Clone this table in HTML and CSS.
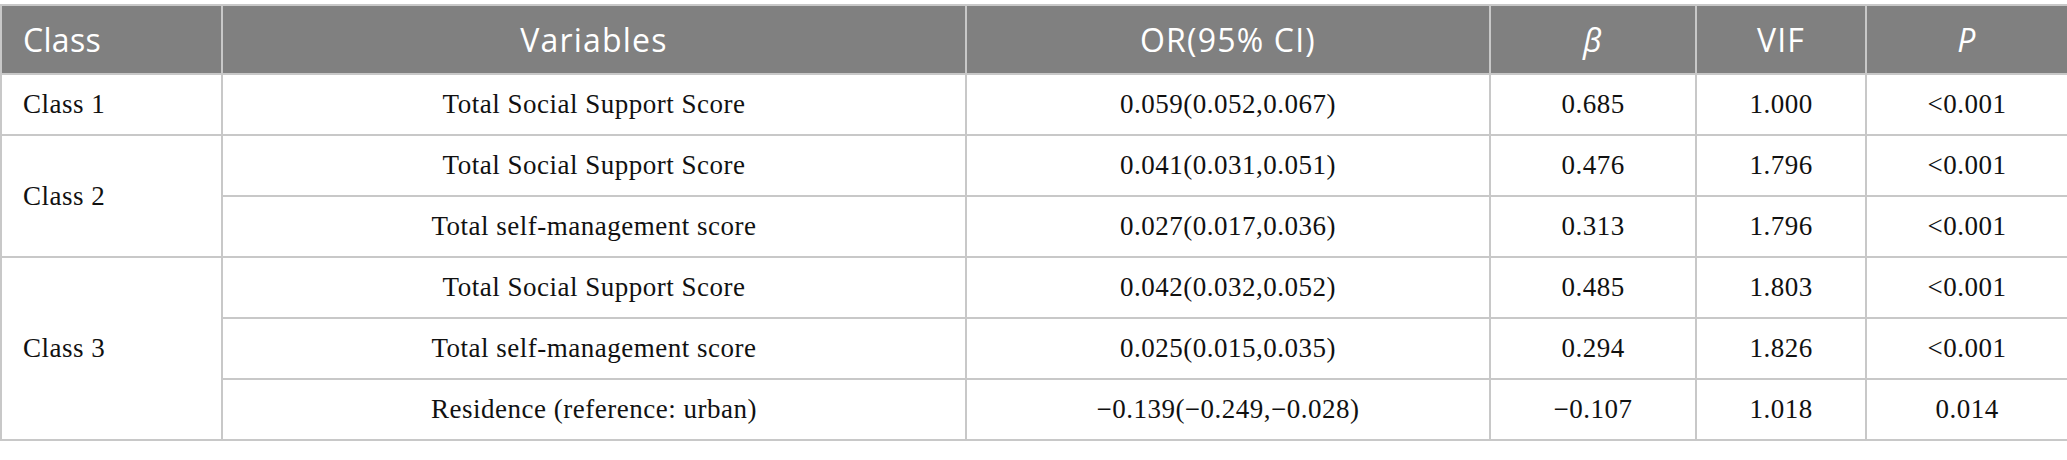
FILE: index.html
```html
<!DOCTYPE html>
<html lang="en">
<head>
<meta charset="utf-8">
<title>Table</title>
<link rel="stylesheet" href="styles.css">
</head>
<body>
<div class="wrap">
<table class="data">
<colgroup>
<col class="w-class"><col class="w-var"><col class="w-or"><col class="w-beta"><col class="w-vif"><col class="w-p">
</colgroup>
<thead>
<tr>
<th class="left">Class</th>
<th>Variables</th>
<th>OR(95% CI)</th>
<th><i>β</i></th>
<th>VIF</th>
<th><i>P</i></th>
</tr>
</thead>
<tbody>
<tr>
<td class="left">Class 1</td>
<td>Total Social Support Score</td>
<td>0.059(0.052,0.067)</td>
<td>0.685</td>
<td>1.000</td>
<td>&lt;0.001</td>
</tr>
<tr>
<td class="left" rowspan="2">Class 2</td>
<td>Total Social Support Score</td>
<td>0.041(0.031,0.051)</td>
<td>0.476</td>
<td>1.796</td>
<td>&lt;0.001</td>
</tr>
<tr>
<td>Total self-management score</td>
<td>0.027(0.017,0.036)</td>
<td>0.313</td>
<td>1.796</td>
<td>&lt;0.001</td>
</tr>
<tr>
<td class="left" rowspan="3">Class 3</td>
<td>Total Social Support Score</td>
<td>0.042(0.032,0.052)</td>
<td>0.485</td>
<td>1.803</td>
<td>&lt;0.001</td>
</tr>
<tr>
<td>Total self-management score</td>
<td>0.025(0.015,0.035)</td>
<td>0.294</td>
<td>1.826</td>
<td>&lt;0.001</td>
</tr>
<tr>
<td>Residence (reference: urban)</td>
<td>&minus;0.139(&minus;0.249,&minus;0.028)</td>
<td>&minus;0.107</td>
<td>1.018</td>
<td>0.014</td>
</tr>
</tbody>
</table>
</div>
</body>
</html>
```
FILE: styles.css
```css
html, body {
  margin: 0;
  padding: 0;
  background: #ffffff;
}
.wrap {
  padding-top: 4px;
}
.data {
  width: 2067px;
  border-collapse: collapse;
  table-layout: fixed;
}
.w-class { width: 221px; }
.w-var { width: 744px; }
.w-or { width: 524px; }
.w-beta { width: 206px; }
.w-vif { width: 170px; }
.w-p { width: 202px; }

.data th, .data td {
  border: 2px solid #c8c8c8;
  text-align: center;
  vertical-align: middle;
  padding: 0 20px;
}
.data th {
  background: #808080;
  color: #ffffff;
  font-family: "Open Sans", "Lato", sans-serif;
  font-weight: 400;
  font-size: 32px;
  letter-spacing: 1.2px;
  height: 67px;
}
.data td {
  color: #111111;
  font-family: "Liberation Serif", "Times New Roman", serif;
  font-size: 27px;
  letter-spacing: 0.5px;
  height: 59px;
}
.data .left {
  text-align: left;
}
.data th.left {
  padding-left: 21px;
  letter-spacing: 0.3px;
}
.data td.left {
  padding-left: 21px;
}
.data th i {
  font-style: italic;
}
```
